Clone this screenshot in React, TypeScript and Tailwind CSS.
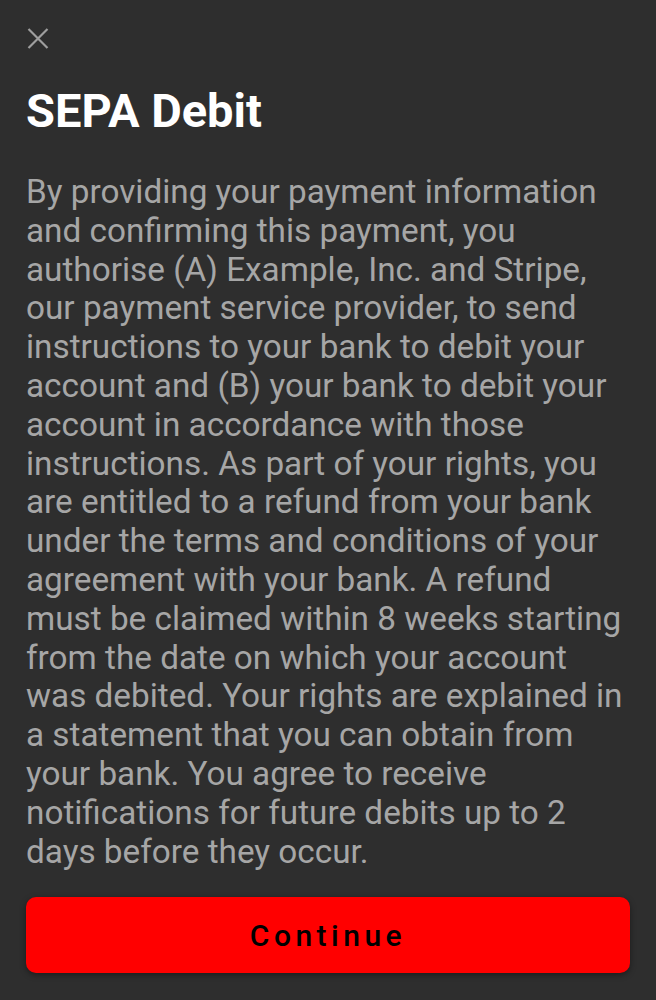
export default function App() {
  return (
    <div className="min-h-[1000px] w-full bg-[#2e2e2e] font-['Roboto',sans-serif] flex flex-col">
      <div className="px-[26px] pt-[26px]">
        <button className="w-[24px] h-[24px] flex items-center justify-center text-[#9e9e9e]" aria-label="Close">
          <svg width="24" height="24" viewBox="0 0 24 24" fill="none" stroke="currentColor" strokeWidth="2.2">
            <path d="M2.5 3L21.5 22M21.5 3L2.5 22" />
          </svg>
        </button>
        <h1 className="mt-[33px] text-[47px] leading-[56px] font-bold text-white">SEPA Debit</h1>
        <p className="mt-[34px] pr-[4px] text-[33.3px] leading-[38.8px] text-[#a6a6a6]">
          By providing your payment information and confirming this payment, you authorise (A) Example, Inc. and Stripe, our payment service provider, to send instructions to your bank to debit your account and (B) your bank to debit your account in accordance with those instructions. As part of your rights, you are entitled to a refund from your bank under the terms and conditions of your agreement with your bank. A refund must be claimed within 8 weeks starting from the date on which your account was debited. Your rights are explained in a statement that you can obtain from your bank. You agree to receive notifications for future debits up to 2 days before they occur.
        </p>
        <button className="mt-[26px] w-full h-[76px] rounded-[10px] bg-[#ff0000] shadow-[0_2px_6px_rgba(0,0,0,0.4)] text-black text-[30px] font-medium tracking-[4.5px]">
          Continue
        </button>
      </div>
    </div>
  );
}
